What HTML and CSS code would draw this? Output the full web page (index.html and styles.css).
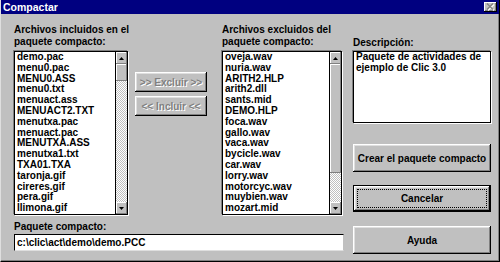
FILE: index.html
```html
<!DOCTYPE html>
<html lang="es">
<head>
  <meta charset="UTF-8">
  <title>Compactar</title>
  <link rel="stylesheet" href="styles.css">
</head>
<body>
  <div class="window">
    <div class="titlebar">
      <span class="title">Compactar</span>
      <span class="close-btn">
        <svg width="9" height="8" viewBox="0 0 9 8">
          <path d="M2 1.5 L8 7.5 M8 1.5 L2 7.5" stroke="#fff" stroke-width="1.4"/>
          <path d="M1 0.5 L7 6.5 M7 0.5 L1 6.5" stroke="#808080" stroke-width="1.4"/>
        </svg>
      </span>
    </div>

    <div class="dialog">
      <div class="label label-inc">Archivos incluidos en el<br>paquete compacto:</div>
      <div class="label label-exc">Archivos excluidos del<br>paquete compacto:</div>
      <div class="label label-desc">Descripción:</div>

      <div class="listbox list-inc">
        <ul class="items">
          <li>demo.pac</li>
          <li>menu0.pac</li>
          <li>MENU0.ASS</li>
          <li>menu0.txt</li>
          <li>menuact.ass</li>
          <li>MENUACT2.TXT</li>
          <li>menutxa.pac</li>
          <li>menuact.pac</li>
          <li>MENUTXA.ASS</li>
          <li>menutxa1.txt</li>
          <li>TXA01.TXA</li>
          <li>taronja.gif</li>
          <li>cireres.gif</li>
          <li>pera.gif</li>
          <li>llimona.gif</li>
        </ul>
        <div class="scrollbar">
          <div class="arrow">
            <svg width="5" height="3" viewBox="0 0 5 3"><polygon points="2.5,0 5,3 0,3" fill="#000"/></svg>
          </div>
          <div class="thumb thumb-small"></div>
          <div class="track"></div>
          <div class="arrow">
            <svg width="5" height="3" viewBox="0 0 5 3"><polygon points="0,0 5,0 2.5,3" fill="#000"/></svg>
          </div>
        </div>
      </div>

      <div class="moves">
        <button class="btn btn-move" disabled>&gt;&gt; Excluir &gt;&gt;</button>
        <button class="btn btn-move" disabled>&lt;&lt; Incluir &lt;&lt;</button>
      </div>

      <div class="listbox list-exc">
        <ul class="items">
          <li>oveja.wav</li>
          <li>nuria.wav</li>
          <li>ARITH2.HLP</li>
          <li>arith2.dll</li>
          <li>sants.mid</li>
          <li>DEMO.HLP</li>
          <li>foca.wav</li>
          <li>gallo.wav</li>
          <li>vaca.wav</li>
          <li>bycicle.wav</li>
          <li>car.wav</li>
          <li>lorry.wav</li>
          <li>motorcyc.wav</li>
          <li>muybien.wav</li>
          <li>mozart.mid</li>
        </ul>
        <div class="scrollbar">
          <div class="arrow">
            <svg width="5" height="3" viewBox="0 0 5 3"><polygon points="2.5,0 5,3 0,3" fill="#000"/></svg>
          </div>
          <div class="thumb thumb-large"></div>
          <div class="track"></div>
          <div class="arrow">
            <svg width="5" height="3" viewBox="0 0 5 3"><polygon points="0,0 5,0 2.5,3" fill="#000"/></svg>
          </div>
        </div>
      </div>

      <div class="side">
        <div class="desc">Paquete de actividades de ejemplo de Clic 3.0</div>
        <button class="btn btn-side btn-create">Crear el paquete compacto</button>
        <button class="btn btn-side btn-default"><span class="focus">Cancelar</span></button>
        <button class="btn btn-side btn-help">Ayuda</button>
      </div>

      <div class="package">
        <div class="label label-pkg">Paquete compacto:</div>
        <div class="field">c:\clic\act\demo\demo.PCC</div>
      </div>
    </div>
  </div>
</body>
</html>
```

FILE: styles.css
```css
* {
    box-sizing: border-box;
}
body {
    margin: 0;
    background: #c0c0c0;
    font-family: 'Liberation Sans', Arial, sans-serif;
    font-size: 10px;
    font-weight: bold;
    color: #000;
}
.window {
    width: 500px;
    height: 262px;
    background: #c0c0c0;
    border-left: 1px solid #dfdfdf;
    border-right: 1px solid #000;
    border-bottom: 1px solid #000;
    box-shadow: inset -1px -1px 0 #808080;
}
.titlebar {
    height: 14px;
    background: #000080;
    display: flex;
    align-items: center;
    justify-content: space-between;
    padding: 0 2px 0 2px;
}
.title {
    color: #fff;
    font-size: 10.5px;
    line-height: 14px;
}
.close-btn {
    width: 13px;
    height: 10px;
    background: #c0c0c0;
    box-shadow: inset -1px -1px 0 #000, inset 1px 1px 0 #fff, inset -2px -2px 0 #808080;
    display: flex;
    align-items: center;
    justify-content: center;
}
.close-btn svg {
    display: block;
}

/* dialog layout */
.dialog {
    display: grid;
    grid-template-columns: 114px 7px 72px 15px 120px 11px 138px;
    grid-template-rows: 24px 164px 36px;
    grid-template-areas:
        "inc . . . exc . desc"
        "listinc . moves . listexc . side"
        "pkg pkg pkg pkg pkg . side";
    row-gap: 3px;
    padding: 10px 0 0 13px;
}
.label {
    line-height: 12px;
    white-space: nowrap;
}
.label-inc { grid-area: inc; }
.label-exc { grid-area: exc; }
.label-desc {
    grid-area: desc;
    padding-top: 13px;
}
.list-inc { grid-area: listinc; }
.list-exc { grid-area: listexc; }

/* list boxes */
.listbox {
    display: flex;
    background: #fff;
    border: 1px solid #000;
    box-shadow: -1px -1px 0 #808080, 1px 1px 0 #fff;
}
.items {
    flex: 1;
    list-style: none;
    margin: 0;
    padding: 0 0 0 2px;
    line-height: 10.8px;
    overflow: hidden;
}
.scrollbar {
    width: 12px;
    display: flex;
    flex-direction: column;
    border-left: 1px solid #000;
}
.arrow,
.thumb {
    background: #c0c0c0;
    box-shadow: inset -1px -1px 0 #808080, inset 1px 1px 0 #fff;
}
.arrow {
    height: 12px;
    display: flex;
    align-items: center;
    justify-content: center;
}
.arrow svg {
    display: block;
}
.thumb-small {
    height: 17px;
}
.thumb-large {
    height: 109px;
}
.track {
    flex: 1;
    background: repeating-conic-gradient(#c0c0c0 0% 25%, #fff 0% 50%) 0 0 / 2px 2px;
}

/* buttons */
.btn {
    font-family: inherit;
    font-size: 10px;
    font-weight: bold;
    color: #000;
    background: #c0c0c0;
    border: none;
    padding: 0;
    box-shadow: inset -1px -1px 0 #000, inset 1px 1px 0 #fff, inset -2px -2px 0 #808080, inset 2px 2px 0 #dfdfdf;
}
.moves {
    grid-area: moves;
    display: flex;
    flex-direction: column;
    gap: 4px;
    padding-top: 21px;
}
.btn-move {
    height: 20px;
    width: 72px;
    color: #808080;
    text-shadow: 1px 1px 0 #fff;
}
.side {
    grid-area: side;
    display: flex;
    flex-direction: column;
}
.desc {
    height: 72px;
    background: #fff;
    border: 1px solid #000;
    box-shadow: -1px -1px 0 #808080, 1px 1px 0 #fff;
    padding: 0 2px;
    line-height: 10.8px;
}
.btn-side {
    width: 138px;
    height: 28px;
}
.btn-create {
    margin-top: 21px;
}
.btn-default {
    margin-top: 13px;
    height: 27px;
    border: 1px solid #000;
    padding: 3px;
    display: flex;
}
.btn-default .focus {
    flex: 1;
    display: flex;
    align-items: center;
    justify-content: center;
    border: 1px dotted #000;
}
.btn-help {
    margin-top: 14px;
}

/* package path */
.package {
    grid-area: pkg;
    padding-top: 3px;
}
.label-pkg {
    line-height: 12px;
}
.field {
    margin-top: 1px;
    height: 17px;
    width: 330px;
    background: #fff;
    border: 1px solid #000;
    border-right-color: #c0c0c0;
    border-bottom-color: #dfdfdf;
    line-height: 15px;
    padding-left: 2px;
    font-weight: bold;
}
```
